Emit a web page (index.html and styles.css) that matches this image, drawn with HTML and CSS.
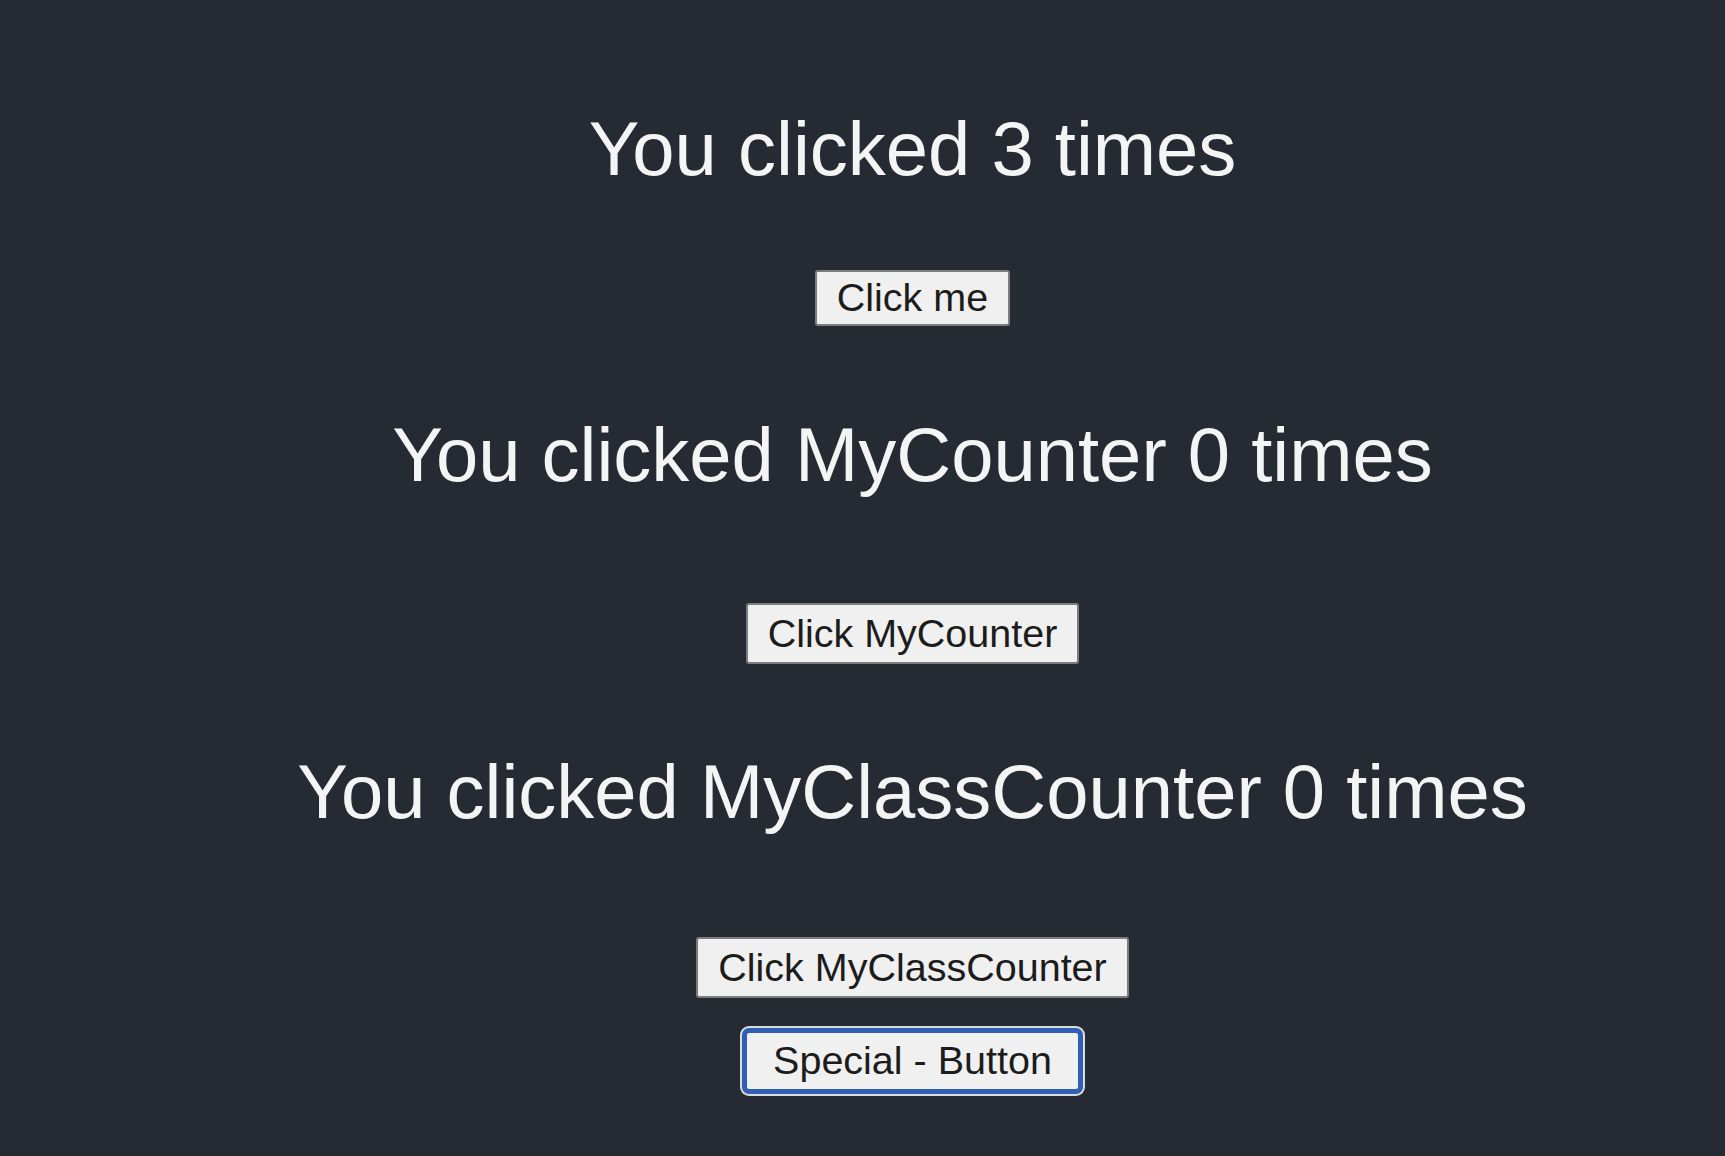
FILE: index.html
```html
<!DOCTYPE html>
<html lang="en">
<head>
<meta charset="utf-8">
<title>Counter</title>
<link rel="stylesheet" href="styles.css">
</head>
<body>
<div class="app">
  <p class="heading h-first">You clicked 3 times</p>
  <button class="btn b-first">Click me</button>
  <p class="heading h-second">You clicked MyCounter 0 times</p>
  <button class="btn b-second">Click MyCounter</button>
  <p class="heading h-third">You clicked MyClassCounter 0 times</p>
  <button class="btn b-third">Click MyClassCounter</button>
  <button class="btn special">Special - Button</button>
</div>
</body>
</html>
```

FILE: styles.css
```css
html, body {
  margin: 0;
  padding: 0;
  background: #262a33;
}
.app {
  min-height: 1156px;
  box-sizing: border-box;
  padding-left: 100px;
  display: flex;
  flex-direction: column;
  align-items: center;
  font-family: "Liberation Sans", Arial, sans-serif;
  color: #f4f4f4;
}
.heading {
  margin: 0;
  font-size: 76px;
  line-height: 92px;
  white-space: nowrap;
}
.h-first { margin-top: 103px; }
.b-first { margin-top: 75px; }
.h-second { margin-top: 83px; }
.b-second { margin-top: 102px; }
.h-third { margin-top: 82px; }
.b-third { margin-top: 99px; }
.btn {
  font-family: "Liberation Sans", Arial, sans-serif;
  font-size: 39.5px;
  line-height: 45px;
  color: #1c1c1c;
  background: #f0f0f0;
  border: 2px solid #7d7d7d;
  border-radius: 3px;
  padding: 6px 20px;
  margin-bottom: 0;
}
.b-first { padding-top: 3px; padding-bottom: 4px; }
.special {
  margin-top: 30px;
  border: 5px solid #2f5fb6;
  border-radius: 7px;
  padding: 5px 26px 6px;
  box-shadow: 0 0 0 2px #dcdcdc;
}
```
